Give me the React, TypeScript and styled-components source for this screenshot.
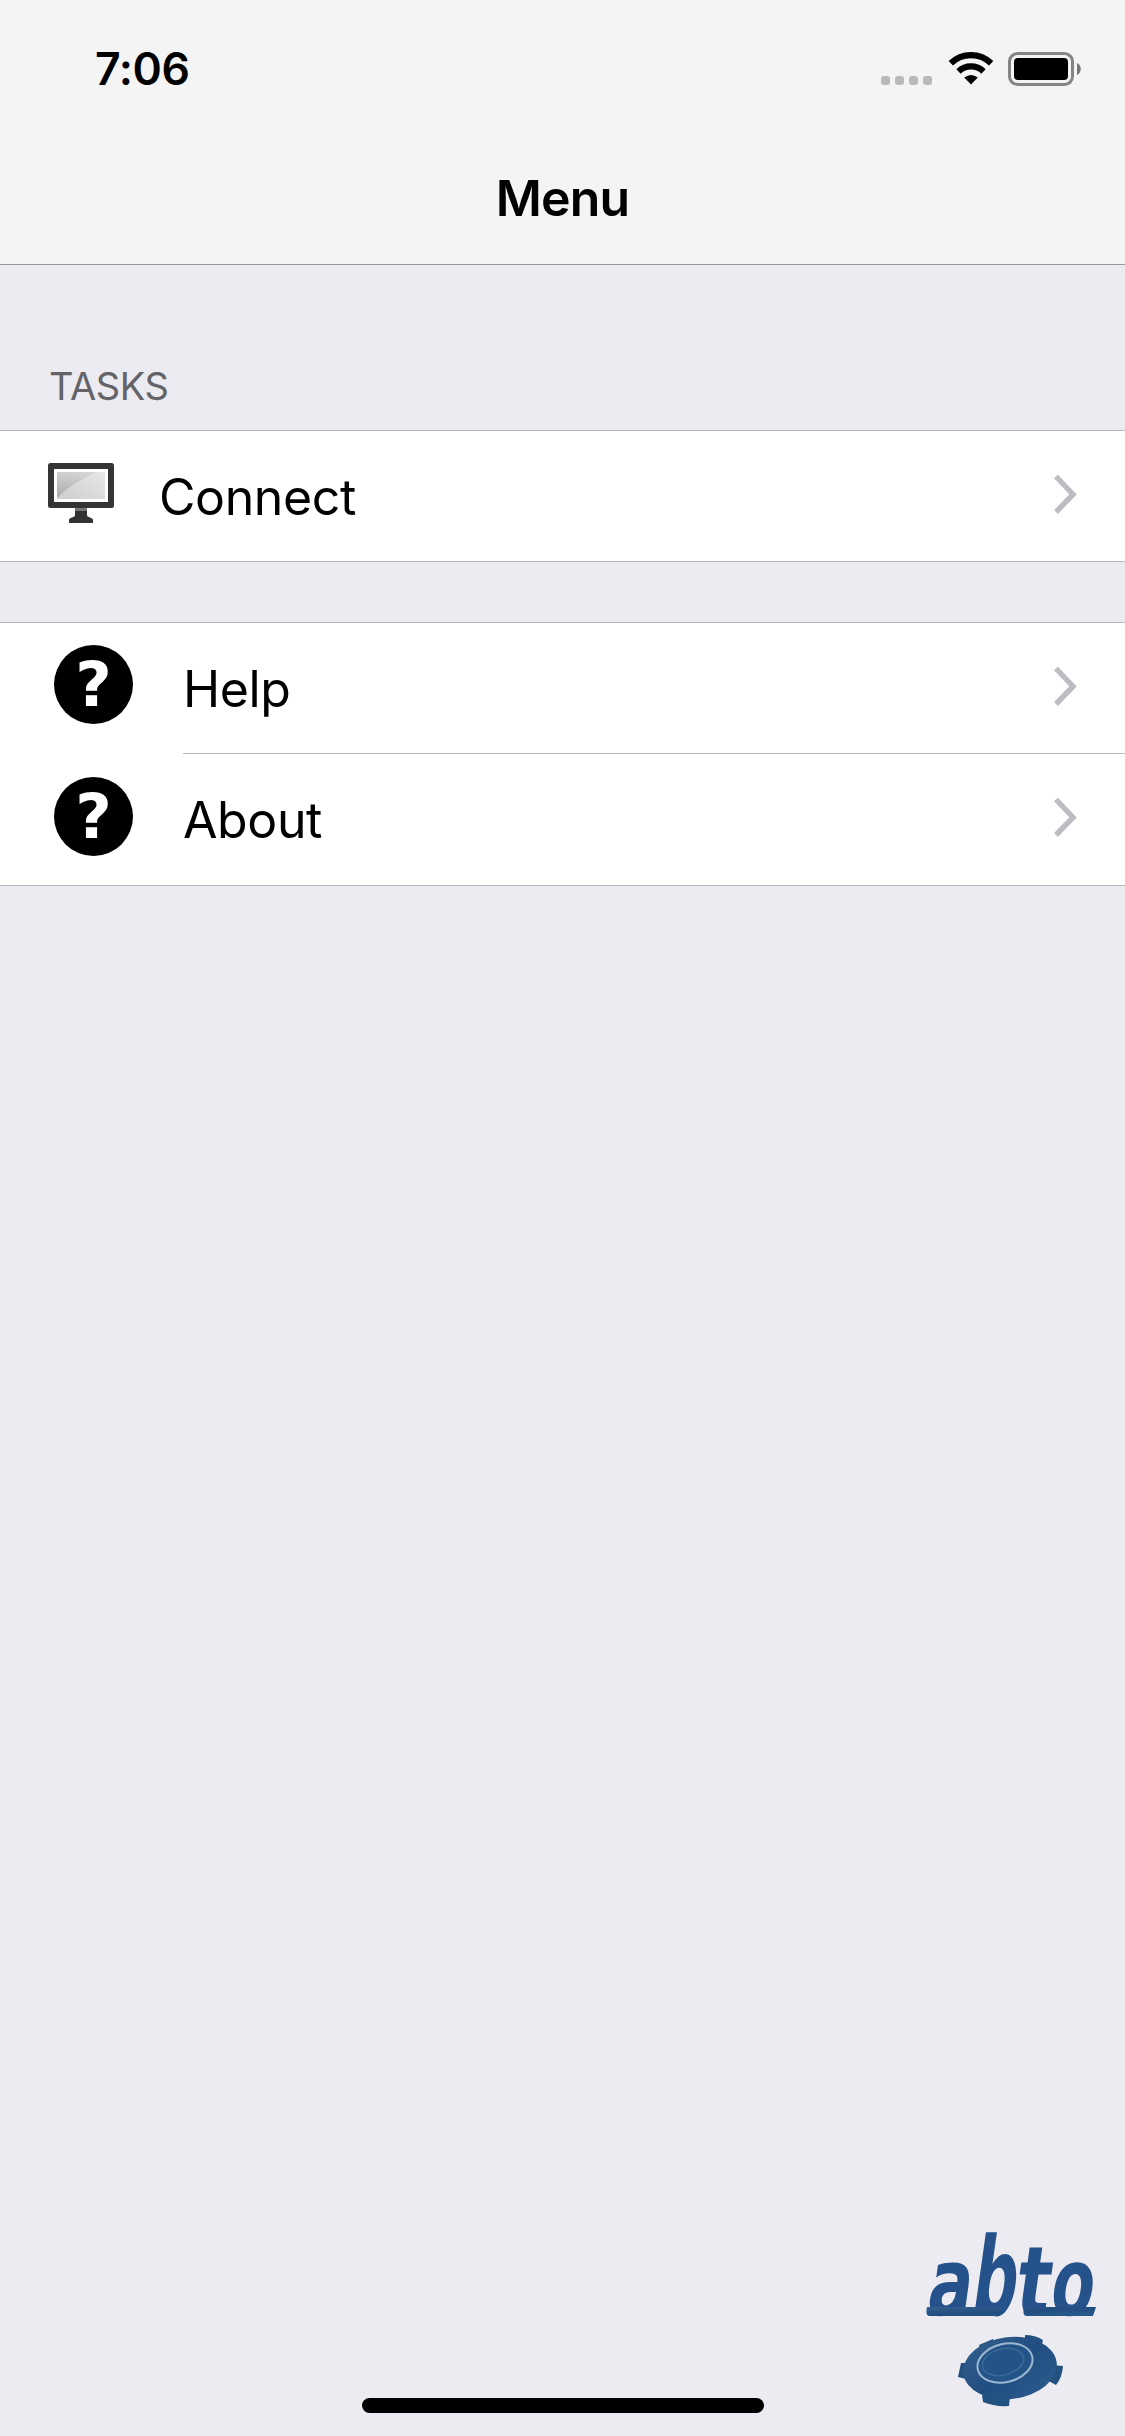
import React from 'react';
import styled, { createGlobalStyle } from 'styled-components';

const GlobalStyle = createGlobalStyle`
  * { box-sizing: border-box; }
  body { margin: 0; background: #ebebf1; }
`;

const Screen = styled.div`
  width: 1125px;
  height: 2436px;
  display: flex;
  flex-direction: column;
  background: #ebebf1;
  color: #000;
  font-family: Inter, 'Liberation Sans', sans-serif;
  overflow: hidden;
`;

const Header = styled.header`
  height: 265px;
  flex: none;
  background: #f4f4f4;
  border-bottom: 1px solid #99999c;
`;

const StatusBar = styled.div`
  height: 132px;
  display: flex;
  justify-content: space-between;
  padding: 0 43px 0 95px;
`;

const Clock = styled.span`
  font-size: 44.5px;
  line-height: 54px;
  font-weight: 600;
  letter-spacing: -0.4px;
  padding-top: 42px;
`;

const StatusIcons = styled.div`
  display: flex;
  align-items: flex-start;
  padding-top: 51px;
`;

const NavTitle = styled.h1`
  margin: 0;
  height: 132px;
  line-height: 132px;
  text-align: center;
  font-size: 50px;
  font-weight: 600;
  letter-spacing: -0.8px;
`;

const SectionTitle = styled.h2`
  margin: 0;
  height: 165px;
  padding: 98px 0 0 49px;
  color: #636368;
  font-size: 38px;
  line-height: 46px;
  font-weight: 400;
  letter-spacing: -0.4px;
`;

const Group = styled.section<{ $gap?: number }>`
  margin-top: ${(p) => p.$gap ?? 0}px;
  background: #fff;
  border-top: 1px solid #bab9be;
  border-bottom: 1px solid #bab9be;
`;

const Row = styled.div<{ $inset: number }>`
  display: grid;
  grid-template-columns: ${(p) => p.$inset}px 1fr;
  height: 131px;
  &:last-child { height: 130px; }
  & + & { height: 131px; }
`;

const IconCell = styled.div<{ $left: number; $top: number }>`
  padding: ${(p) => p.$top}px 0 0 ${(p) => p.$left}px;
`;

const RowBody = styled.div<{ $divided?: boolean }>`
  display: flex;
  justify-content: space-between;
  padding: 0 47px 0 0;
  border-bottom: ${(p) => (p.$divided ? '1px solid #bab9be' : 'none')};
`;

const Label = styled.span<{ $spacing: number }>`
  font-size: 50px;
  line-height: 60px;
  padding-top: 36px;
  letter-spacing: ${(p) => p.$spacing}px;
`;

const ChevronSvg = styled.svg`
  margin-top: 42px;
  flex: none;
`;

const HelpBadge = styled.div`
  width: 79px;
  height: 79px;
  border-radius: 50%;
  background: #000;
  color: #fff;
  text-align: center;
  font: bold 63px/80px 'DejaVu Sans', sans-serif;
`;

const Footer = styled.footer`
  margin-top: auto;
  display: grid;
  grid-template-columns: 362px 402px 1fr;
  align-items: end;
`;

const HomeIndicator = styled.div`
  grid-column: 2;
  height: 15px;
  margin-bottom: 23px;
  border-radius: 8px;
  background: #000;
`;

const Logo = styled.svg`
  grid-column: 3;
  justify-self: end;
  display: block;
`;

const Chevron = () => (
  <ChevronSvg width="25" height="42" viewBox="0 0 25 42">
    <path d="M3 3.5 L20 21.5 L3 39" fill="none" stroke="#bdbcc2" strokeWidth="5.4" />
  </ChevronSvg>
);

const MonitorIcon = () => (
  <svg width="66" height="60" viewBox="0 0 66 60" display="block">
    <defs>
      <linearGradient id="screen" x1="1" y1="0" x2="0" y2="1">
        <stop offset="0" stopColor="#e8e8e8" />
        <stop offset="1" stopColor="#cecece" />
      </linearGradient>
      <linearGradient id="glare" x1="0.5" y1="0" x2="0.3" y2="1">
        <stop offset="0" stopColor="#d4d4d4" />
        <stop offset="1" stopColor="#adadad" />
      </linearGradient>
    </defs>
    <path d="M27 45h12v7c0 3 6 2 6 5v3H21v-3c0-3 6-2 6-5z" fill="#333" />
    <rect x="27" y="45" width="12" height="3" fill="#777" />
    <rect width="66" height="45" rx="2.5" fill="#343634" />
    <rect x="6" y="6" width="54" height="33" fill="#fff" />
    <rect x="9" y="9" width="48" height="27" fill="url(#screen)" />
    <path d="M9 9h39L35 16Q20 24 9 35z" fill="url(#glare)" />
  </svg>
);

const SignalDots = () => (
  <svg width="52" height="34" viewBox="0 0 52 34">
    {[0, 14, 28, 42].map((x) => (
      <rect key={x} x={x} y="25" width="9" height="9" rx="3" fill="#b9b9b9" />
    ))}
  </svg>
);

const WifiIcon = () => (
  <svg width="46" height="34" viewBox="0 0 46 34" style={{ marginLeft: 15 }}>
    <path d="M2.8 12.3 A29 29 0 0 1 43.2 12.3" fill="none" stroke="#000" strokeWidth="6.2" />
    <path d="M10.5 20.4 A18 18 0 0 1 35.5 20.4" fill="none" stroke="#000" strokeWidth="6.2" />
    <path d="M16.2 26.5 Q23 21.3 29.8 26.5 L23 33.5z" />
  </svg>
);

const BatteryIcon = () => (
  <svg width="74" height="36" viewBox="0 0 74 36" style={{ marginLeft: 14 }}>
    <rect x="1.5" y="2.5" width="63" height="31" rx="8" fill="none" stroke="#858585" strokeWidth="3" />
    <rect x="6" y="7" width="54" height="22" rx="4" />
    <path d="M69 12c5 2 5 10 0 12z" fill="#777" />
  </svg>
);

const logoLetters = [
  { ch: 'a', x: 9, sx: 0.66, sy: 0.94 },
  { ch: 'b', x: 53, sx: 0.63, sy: 1.09 },
  { ch: 't', x: 97, sx: 0.72, sy: 0.96 },
  { ch: 'o', x: 132, sx: 0.63, sy: 0.94 },
];

const AbtoLogo = () => (
  <Logo width="205" height="216" viewBox="0 0 205 216">
    <defs>
      <linearGradient id="ink" x1="0" y1="0" x2="1" y2="1">
        <stop offset="0" stopColor="#35618f" />
        <stop offset="0.5" stopColor="#214e80" />
        <stop offset="1" stopColor="#2c5c8e" />
      </linearGradient>
    </defs>
    <g fill="#25528a" fontFamily="'DejaVu Sans', sans-serif" fontWeight="700" fontSize="100">
      {logoLetters.map((l) => (
        <text key={l.ch} transform={`translate(${l.x - 4} 95) skewX(-8) scale(${l.sx} ${l.sy})`}>
          {l.ch}
        </text>
      ))}
    </g>
    <path d="M7 87h75l-2 9H10q-5 0-3-9z M104 87h72l-3 9h-66q-5 0-3-9z" fill="url(#ink)" />
    <g fill="#23517f">
      <path d="M59 125l14-6 4 9-14 8z M105 115q10 0 18 5l-2 8-16-4z M41 143l-3 14 8 2 3-16z M131 145l12 1q-1 12-7 19l-9-5z M62 175l1 7q12 5 26 4l1-10z" />
      <ellipse cx="90" cy="148" rx="47" ry="31" transform="rotate(-7 90 148)" fill="url(#ink)" />
    </g>
    <ellipse cx="85" cy="143" rx="28" ry="19" transform="rotate(-14 85 143)" fill="#245487" stroke="#9cb8d1" strokeWidth="2" />
    <ellipse cx="83" cy="142" rx="21" ry="13" transform="rotate(-14 83 142)" fill="none" stroke="#3b6c98" strokeWidth="1.5" />
  </Logo>
);

export default function App() {
  return (
    <Screen>
      <GlobalStyle />
      <Header>
        <StatusBar>
          <Clock>7:06</Clock>
          <StatusIcons>
            <SignalDots />
            <WifiIcon />
            <BatteryIcon />
          </StatusIcons>
        </StatusBar>
        <NavTitle>Menu</NavTitle>
      </Header>
      <SectionTitle>TASKS</SectionTitle>
      <Group>
        <Row $inset={159}>
          <IconCell $left={48} $top={32}><MonitorIcon /></IconCell>
          <RowBody><Label $spacing={-0.4}>Connect</Label><Chevron /></RowBody>
        </Row>
      </Group>
      <Group $gap={60}>
        <Row $inset={183}>
          <IconCell $left={54} $top={22}><HelpBadge>?</HelpBadge></IconCell>
          <RowBody $divided><Label $spacing={-0.4}>Help</Label><Chevron /></RowBody>
        </Row>
        <Row $inset={183}>
          <IconCell $left={54} $top={23}><HelpBadge>?</HelpBadge></IconCell>
          <RowBody><Label $spacing={-0.4}>About</Label><Chevron /></RowBody>
        </Row>
      </Group>
      <Footer>
        <HomeIndicator />
        <Logo as={AbtoLogo} />
      </Footer>
    </Screen>
  );
}
